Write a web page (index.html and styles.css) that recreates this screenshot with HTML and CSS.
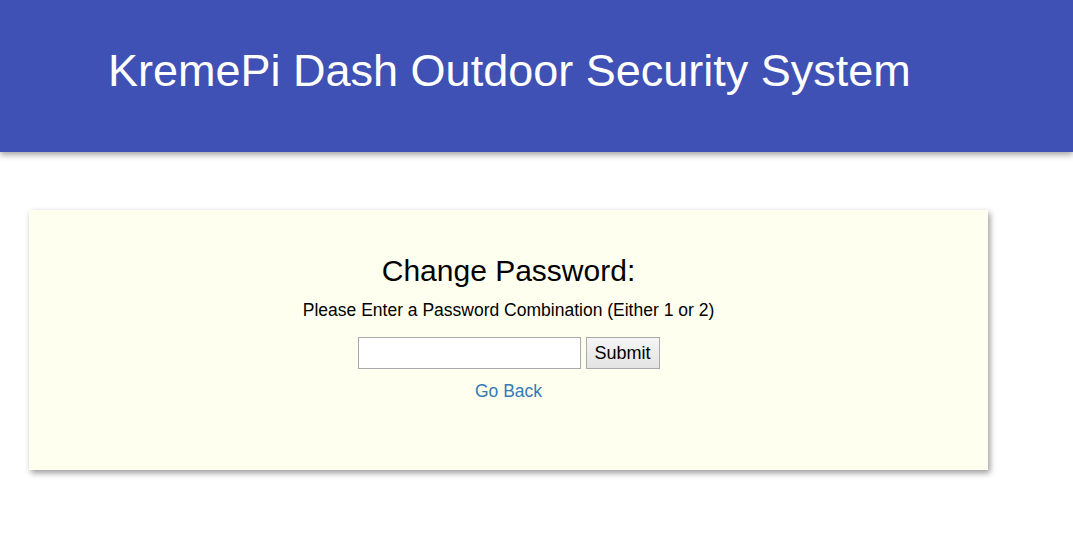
FILE: index.html
```html
<!DOCTYPE html>
<html>
<head>
<meta charset="utf-8">
<link rel="stylesheet" href="styles.css">
</head>
<body>
<header class="topbar">
  <h1 class="title">KremePi Dash Outdoor Security System</h1>
</header>
<main class="content">
  <section class="card">
    <h2 class="card-title">Change Password:</h2>
    <p class="hint">Please Enter a Password Combination (Either 1 or 2)</p>
    <form class="pw-form">
      <input class="pw-input" type="text">
      <button class="pw-submit" type="button">Submit</button>
    </form>
    <a class="back" href="#">Go Back</a>
  </section>
</main>
</body>
</html>
```
FILE: styles.css
```css
html, body {
  margin: 0;
  padding: 0;
  background: #ffffff;
  font-family: "Liberation Sans", Arial, sans-serif;
}
.topbar {
  height: 152px;
  background: #3f51b5;
  box-shadow: 0 3px 6px rgba(0,0,0,0.35);
  display: flex;
  align-items: center;
  padding-left: 108px;
  box-sizing: border-box;
}
.title {
  margin: 0 0 10px 0;
  color: #ffffff;
  font-weight: normal;
  font-size: 45px;
}
.content {
  padding: 58px 0 40px 29px;
}
.card {
  width: 959px;
  height: 260px;
  box-sizing: border-box;
  background: #fffff0;
  box-shadow: 2px 3px 6px rgba(0,0,0,0.4);
  display: flex;
  flex-direction: column;
  align-items: center;
  padding-top: 44px;
}
.card-title {
  margin: 0;
  font-weight: normal;
  font-size: 30px;
  color: #000;
}
.hint {
  margin: 12px 0 0 0;
  font-size: 17.5px;
  color: #000;
}
.pw-form {
  margin-top: 16px;
  display: flex;
  gap: 5px;
}
.pw-input {
  width: 223px;
  height: 32px;
  box-sizing: border-box;
  border: 1px solid #a9a9a9;
  background: #fff;
  margin: 0;
}
.pw-submit {
  height: 32px;
  width: 74px;
  box-sizing: border-box;
  border: 1px solid #a9a9a9;
  background: linear-gradient(#f6f6f6, #e3e3e3);
  font-family: "Liberation Sans", Arial, sans-serif;
  font-size: 18px;
  color: #000;
  margin: 0;
  padding: 0;
}
.back {
  margin-top: 12px;
  font-size: 17.5px;
  color: #337ab7;
  text-decoration: none;
}
```
